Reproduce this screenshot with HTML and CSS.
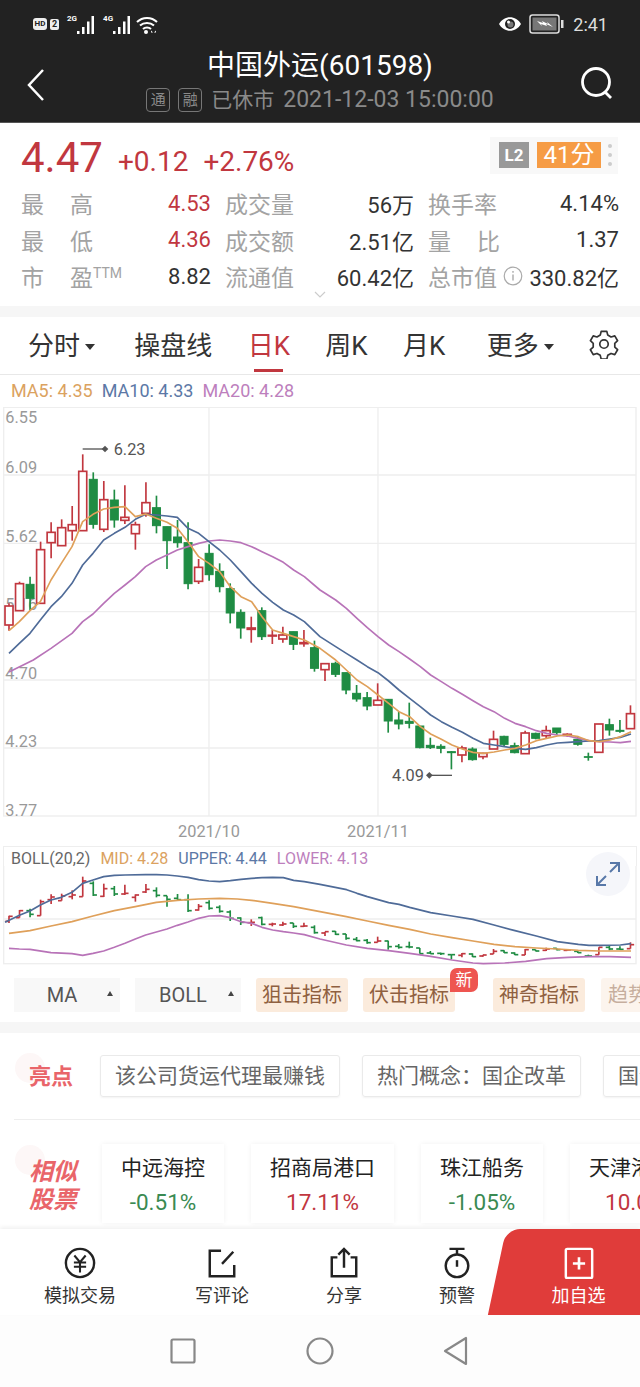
FILE: index.html
```html
<!DOCTYPE html>
<html lang="zh">
<head>
  <meta charset="utf-8">
  <title>中国外运(601598)</title>
  <link rel="stylesheet" href="styles.css">
</head>
<body>
  <div class="app">
    <header class="top">
      <div class="status">
        <div class="status-side">
          <span class="hd">HD</span>
          <span class="sim">2</span>
          <span class="net">2G</span>
          <svg class="bars" width="18" height="18" viewBox="0 0 18 18"><path d="M1 18v-3h2.500v3zM6 18V11h2.500v7zM11 18V5.500h2.500V18zM15.500 18V0h2.500v18z"/></svg>
          <span class="net net-next">4G</span>
          <svg class="bars" width="18" height="18" viewBox="0 0 18 18"><path d="M1 18v-3h2.500v3zM6 18V11h2.500v7zM11 18V5.500h2.500V18zM15.500 18V0h2.500v18z"/></svg>
          <svg class="wifi" width="22" height="18" viewBox="0 0 22 18">
            <path d="M1 6c5.500-5.500 14.500-5.500 20 0M4 9.500c3.800-3.500 10.200-3.500 14 0M7 13c2.200-2 5.800-2 8 0" fill="none" stroke="#fff" stroke-width="2"/>
            <circle cx="10" cy="16" r="2" fill="#fff"/>
            <path d="M15 14.500l2 2-2 0zM20 14.500l-2 2 2 0z" fill="#fff"/>
          </svg>
        </div>
        <div class="status-side">
          <svg width="24" height="16" viewBox="0 0 24 16">
            <path d="M1 8c5-9 17-9 22 0-5 9-17 9-22 0z" fill="#fff"/>
            <circle cx="12" cy="8" r="5" fill="#222"/>
            <circle cx="12.500" cy="8.500" r="3" fill="#777"/>
            <circle cx="10.500" cy="6" r="1.500" fill="#fff"/>
          </svg>
          <svg class="batt" width="35" height="20" viewBox="0 0 35 20">
            <rect x="1" y="1" width="29" height="18" rx="2.500" fill="none" stroke="#ddd" stroke-width="1.500"/>
            <rect x="3.500" y="3.500" width="24" height="13" fill="#777"/>
            <path d="M8 7l6 2-1-2 6 3-1-2 6 5-7-3 1 2-6-2 1 2z" fill="#fff"/>
            <rect x="32" y="6" width="2.500" height="8" fill="#ddd"/>
          </svg>
          <span class="clock">2:41</span>
        </div>
      </div>
      <div class="titlebar">
        <svg class="back" width="20" height="34" viewBox="0 0 20 34"><path d="M17 2L3 17l14 15" fill="none" stroke="#fff" stroke-width="2.500"/></svg>
        <div class="title-mid">
          <h1 class="stock-name">中国外运(601598)</h1>
          <div class="market">
            <span class="tag">通</span>
            <span class="tag">融</span>
            <span class="market-text">已休市</span>
            <span class="market-time">2021-12-03 15:00:00</span>
          </div>
        </div>
        <svg class="search" width="34" height="34" viewBox="0 0 34 34">
          <circle cx="16" cy="15" r="13.500" fill="none" stroke="#fff" stroke-width="2.800"/>
          <path d="M25 25l6 6" stroke="#fff" stroke-width="2.800"/>
        </svg>
      </div>
    </header>

    <section class="quote">
      <div class="price-row">
        <span class="price">4.47</span>
        <span class="delta">+0.12</span>
        <span class="delta">+2.76%</span>
        <div class="score">
          <span class="l2">L2</span>
          <span class="points">41分</span>
          <span class="dots"><i></i><i></i><i></i></span>
        </div>
      </div>
      <div class="stats">
        <div class="stat"><span class="lbl spread"><b>最</b><b>高</b></span><span class="val up">4.53</span></div>
        <div class="stat"><span class="lbl">成交量</span><span class="val">56万</span></div>
        <div class="stat"><span class="lbl">换手率</span><span class="val">4.14%</span></div>
        <div class="stat"><span class="lbl spread"><b>最</b><b>低</b></span><span class="val up">4.36</span></div>
        <div class="stat"><span class="lbl">成交额</span><span class="val">2.51亿</span></div>
        <div class="stat"><span class="lbl spread"><b>量</b><b>比</b></span><span class="val">1.37</span></div>
        <div class="stat"><span class="lbl spread"><b>市</b><b>盈<sup class="ttm">TTM</sup></b></span><span class="val">8.82</span></div>
        <div class="stat"><span class="lbl">流通值</span><span class="val">60.42亿</span></div>
        <div class="stat">
          <span class="lbl">总市值</span>
          <svg class="info" width="20" height="20" viewBox="0 0 20 20">
            <circle cx="10" cy="10" r="8.800" fill="none" stroke="#aaa" stroke-width="1.200"/>
            <path d="M10 8.500v6M10 5v1.800" stroke="#aaa" stroke-width="1.400"/>
          </svg>
          <span class="val val-push">330.82亿</span>
        </div>
      </div>
      <svg class="more-down" width="12" height="7" viewBox="0 0 12 7"><path d="M1 1l5 5 5-5" fill="none" stroke="#ccc" stroke-width="1.200"/></svg>
    </section>

    <nav class="periods">
      <span class="period period-first has-caret">分时</span>
      <span class="period">操盘线</span>
      <span class="period active">日K</span>
      <span class="period">周K</span>
      <span class="period">月K</span>
      <span class="period period-more has-caret">更多</span>
      <svg width="30" height="30" viewBox="0 0 32 32">
        <path d="M13 2.500h6l1 4 3.500 2 4-1.200 3 5.200-3 2.800v4l3 2.800-3 5.200-4-1.200-3.500 2-1 4h-6l-1-4-3.500-2-4 1.200-3-5.200 3-2.800v-4l-3-2.800 3-5.200 4 1.200 3.500-2z" fill="none" stroke="#333" stroke-width="1.800" stroke-linejoin="round"/>
        <circle cx="16" cy="16" r="4.500" fill="none" stroke="#333" stroke-width="1.800"/>
      </svg>
    </nav>

    <section class="kline">
      <div class="legend">
        <span class="c-orange">MA5: 4.35</span>
        <span class="c-blue">MA10: 4.33</span>
        <span class="c-purple">MA20: 4.28</span>
      </div>
      <svg id="kchart" class="kchart" width="640" height="438" viewBox="0 21 1920 1314"></svg>
    </section>

    <section class="boll">
      <div class="legend legend-boll">
        <span class="c-grey">BOLL(20,2)</span>
        <span class="c-orange">MID: 4.28</span>
        <span class="c-blue">UPPER: 4.44</span>
        <span class="c-purple">LOWER: 4.13</span>
      </div>
      <svg id="bollchart" class="bollchart" width="640" height="99" viewBox="0 3 1920 297"></svg>
      <div class="expand">
        <svg width="28" height="28" viewBox="0 0 28 28">
          <path d="M16 3h9v9M25 3l-9 9M12 25H3v-9M3 25l9-9" fill="none" stroke="#5878a8" stroke-width="2"/>
        </svg>
      </div>
    </section>

    <div class="indicators">
      <span class="select">MA</span>
      <span class="select">BOLL</span>
      <span class="pill">狙击指标</span>
      <span class="pill pill-new">伏击指标<em class="badge">新</em></span>
      <span class="pill pill-third">神奇指标</span>
      <span class="pill pill-fade">趋势指标</span>
    </div>

    <div class="gap"></div>

    <section class="highlights">
      <div class="mark">亮点</div>
      <span class="chip">该公司货运代理最赚钱</span>
      <span class="chip">热门概念：国企改革</span>
      <span class="chip">国企改革</span>
    </section>

    <section class="similar">
      <div class="mark mark-tall">相似<br>股票</div>
      <div class="stock-card"><span class="card-name">中远海控</span><span class="card-pct down">-0.51%</span></div>
      <div class="stock-card"><span class="card-name">招商局港口</span><span class="card-pct up">17.11%</span></div>
      <div class="stock-card"><span class="card-name">珠江船务</span><span class="card-pct down">-1.05%</span></div>
      <div class="stock-card"><span class="card-name">天津港股份</span><span class="card-pct up">10.05%</span></div>
    </section>

    <footer class="actions">
      <div class="action action-sim">
        <svg width="32" height="32" viewBox="0 0 34 34">
          <circle cx="17" cy="17" r="15" fill="none" stroke="#222" stroke-width="2.600"/>
          <path d="M11 9l6 7 6-7M10.500 16.500h13M10.500 21h13M17 16v11" fill="none" stroke="#222" stroke-width="2.200"/>
        </svg>
        <span>模拟交易</span>
      </div>
      <div class="action action-write">
        <svg width="32" height="32" viewBox="0 0 34 34">
          <path d="M16 4H4v27h26V19" fill="none" stroke="#222" stroke-width="2.600"/>
          <path d="M17 18L29 5" stroke="#222" stroke-width="2.600"/>
        </svg>
        <span>写评论</span>
      </div>
      <div class="action action-share">
        <svg width="32" height="32" viewBox="0 0 34 34">
          <path d="M10 11H4v20h26V11h-6" fill="none" stroke="#222" stroke-width="2.600"/>
          <path d="M17 22V3M11 8l6-6 6 6" fill="none" stroke="#222" stroke-width="2.600"/>
        </svg>
        <span>分享</span>
      </div>
      <div class="action action-alert">
        <svg width="32" height="32" viewBox="0 0 34 34">
          <path d="M9 2h16M17 2v6" stroke="#222" stroke-width="2.600"/>
          <circle cx="17" cy="20" r="12" fill="none" stroke="#222" stroke-width="2.600"/>
          <path d="M17 14v7" stroke="#222" stroke-width="2.600"/>
        </svg>
        <span>预警</span>
      </div>
      <div class="action action-add">
        <svg width="32" height="32" viewBox="0 0 34 34">
          <rect x="3" y="2" width="28" height="31" rx="1.500" fill="none" stroke="#fff" stroke-width="2.600"/>
          <path d="M17 11v13M10.500 17.500h13" stroke="#fff" stroke-width="2.800"/>
        </svg>
        <span>加自选</span>
      </div>
    </footer>

    <div class="sysnav">
      <svg width="26" height="26" viewBox="0 0 26 26"><rect x="1.500" y="1.500" width="23" height="23" rx="1.500" fill="none" stroke="#888" stroke-width="2.200"/></svg>
      <svg width="28" height="28" viewBox="0 0 28 28"><circle cx="14" cy="14" r="12.500" fill="none" stroke="#888" stroke-width="2.200"/></svg>
      <svg width="26" height="30" viewBox="0 0 26 30"><path d="M23 2v26L2 15z" fill="none" stroke="#888" stroke-width="2.200" stroke-linejoin="round"/></svg>
    </div>
  </div>
  <script src="chart.js"></script>
</body>
</html>
```
FILE: styles.css
```css
* {
  box-sizing: border-box;
}

body {
  margin: 0;
  background-color: #fff;
  font-family: Roboto, "Noto Sans CJK SC", sans-serif;
  color: #333;
}

.app {
  width: 640px;
  height: 1387px;
  overflow: hidden;
}

.up {
  color: #c1373f;
}

.down {
  color: #3a8a52;
}

/* dark header */
.top {
  height: 123px;
  background-color: #222;
  border-bottom: 1px solid #555;
  color: #fff;
}

.status {
  height: 40px;
  padding: 8px 32px 0 33px;
  display: flex;
  justify-content: space-between;
  align-items: center;
}

.status-side {
  display: flex;
  align-items: center;
}

.hd {
  width: 14px;
  height: 12px;
  border-radius: 3px;
  background-color: #eee;
  color: #222;
  font-size: 8px;
  font-weight: 700;
  line-height: 12px;
  text-align: center;
}

.sim {
  width: 9px;
  height: 11px;
  margin-left: 3px;
  border-radius: 2px;
  background-color: #eee;
  color: #222;
  font-size: 9px;
  font-weight: 700;
  line-height: 11px;
  text-align: center;
}

.net {
  margin: -12px -1px 0 8px;
  font-size: 8px;
  font-weight: 700;
}

.net-next {
  margin-left: 9px;
}

.bars {
  fill: #fff;
  margin-top: 2px;
}

.wifi {
  margin-left: 6px;
  margin-top: 2px;
}

.batt {
  margin-left: 7px;
}

.clock {
  margin-left: 9px;
  font-size: 18px;
  color: #ddd;
}

.titlebar {
  padding: 0 26px;
  display: flex;
  justify-content: space-between;
  align-items: flex-start;
}

.back {
  margin-top: 28px;
}

.search {
  margin-top: 27px;
}

.title-mid {
  display: flex;
  flex-direction: column;
  align-items: center;
  margin-top: 8px;
  margin-left: 14px;
}

.stock-name {
  margin: 0;
  font-size: 28px;
  font-weight: 400;
  line-height: 36px;
}

.market {
  margin-top: 3px;
  display: flex;
  align-items: center;
  color: #8a8a8a;
  font-size: 21px;
  line-height: 26px;
}

.tag {
  width: 24px;
  height: 24px;
  margin-right: 8px;
  border: 1px solid #777;
  border-radius: 4px;
  font-size: 15px;
  line-height: 22px;
  text-align: center;
}

.market-text {
  margin-left: 1px;
}

.market-time {
  margin-left: 9px;
  font-size: 23px;
}

/* price block */
.quote {
  position: relative;
  height: 183px;
  padding: 0 19px 0 21px;
}

.price-row {
  height: 62px;
  display: flex;
  align-items: center;
}

.price {
  margin: 6px 15px 0 0;
  font-size: 42px;
  color: #c1373f;
}

.delta {
  margin: 14px 15px 0 0;
  font-size: 28px;
  color: #c1373f;
}

.score {
  margin: 2px 3px 0 auto;
  height: 37px;
  padding: 0 6px 0 9px;
  display: flex;
  align-items: center;
  background-color: #f8f8f8;
}

.l2 {
  width: 30px;
  height: 26px;
  background-color: #999;
  color: #fff;
  font-size: 17px;
  font-weight: 700;
  line-height: 26px;
  text-align: center;
}

.points {
  width: 64px;
  height: 26px;
  margin-left: 8px;
  background-color: #f69c45;
  color: #fff;
  font-size: 24px;
  line-height: 26px;
  text-align: center;
}

.dots {
  margin-left: 7px;
  display: flex;
  flex-direction: column;
  gap: 5px;
}

.dots i {
  width: 4px;
  height: 4px;
  border-radius: 50%;
  background-color: #ccc;
}

.stats {
  display: grid;
  grid-template-columns: 190px 189px 191px;
  grid-auto-rows: 36.500px;
  column-gap: 14px;
}

.stat {
  display: flex;
  justify-content: space-between;
  align-items: center;
}

.lbl {
  font-size: 23px;
  color: #a3a3a3;
}

.lbl b {
  font-weight: 400;
}

.spread {
  width: 73px;
  display: flex;
  justify-content: space-between;
}

.spread b:last-child {
  white-space: nowrap;
  width: 24px;
}

.ttm {
  font-size: 14px;
  vertical-align: 8px;
  line-height: 0;
}

.val {
  font-size: 22px;
}

.info {
  margin-left: 3px;
}

.val-push {
  margin-left: 3px;
}

.more-down {
  position: absolute;
  left: 314px;
  top: 168px;
}

/* period tabs */
.periods {
  height: 69px;
  padding: 0 21px 4px 28px;
  border-top: 11px solid #f6f6f6;
  border-bottom: 1px solid #e8e8e8;
  display: flex;
  justify-content: space-between;
  align-items: center;
  font-size: 26px;
  color: #333;
}

.period {
  position: relative;
}

.period-first {
  margin-right: 4px;
}

.period-more {
  margin-left: 6px;
}

.has-caret::after {
  content: "";
  display: inline-block;
  margin-left: 5px;
  vertical-align: 5px;
  border-style: solid;
  border-width: 6px 5px 0;
  border-color: #333 transparent transparent;
}

.active {
  color: #c1373f;
}

.active::after {
  content: "";
  position: absolute;
  left: 6px;
  right: 7px;
  bottom: -10px;
  height: 3px;
  background-color: #c1373f;
}

/* charts */
.kline {
  height: 471px;
}

.legend {
  height: 32px;
  padding: 6px 0 0 11px;
  display: flex;
  gap: 9px;
  font-size: 18px;
  line-height: 20px;
}

.c-orange {
  color: #dba25f;
}

.c-blue {
  color: #5c78a6;
}

.c-purple {
  color: #bd7fbd;
}

.c-grey {
  color: #666;
}

.kchart,
.bollchart {
  display: block;
}

.grid-line {
  stroke: #eee;
  stroke-width: 4;
  fill: none;
}

.axis-text {
  font-size: 49px;
  fill: #999;
}

.mark-text {
  font-size: 49px;
  fill: #555;
}

.mark-line {
  stroke: #555;
  stroke-width: 4;
}

.mark-dot {
  fill: #555;
}

.wick-up {
  stroke: #c1373f;
  stroke-width: 5;
}

.wick-down {
  stroke: #1f8c43;
  stroke-width: 5;
}

.body-up {
  fill: #fff;
  stroke: #c1373f;
  stroke-width: 5;
}

.body-down {
  fill: #1f8c43;
  stroke: #1f8c43;
  stroke-width: 3;
}

.line {
  fill: none;
  stroke-width: 5;
  stroke-linejoin: round;
}

.line-orange {
  stroke: #dfa05a;
}

.line-blue {
  stroke: #4f6b98;
}

.line-purple {
  stroke: #b873b8;
}

.boll {
  position: relative;
  height: 119px;
}

.legend-boll {
  height: 20px;
  margin: 0 3px;
  padding: 2px 0 0 7px;
  border: 1.500px solid #eee;
  border-bottom: 0;
  gap: 10px;
  font-size: 16px;
}

.expand {
  position: absolute;
  left: 586px;
  top: 6px;
  width: 44px;
  height: 44px;
  padding: 8px;
  border-radius: 50%;
  background-color: #f5f6fa;
}

/* indicator selector */
.indicators {
  height: 57px;
  padding: 13px 0 0 14px;
  display: flex;
  gap: 15px;
  overflow: hidden;
  background-color: #fff;
}

.select {
  position: relative;
  flex: none;
  width: 106px;
  height: 34px;
  padding-right: 10px;
  background-color: #f8f8f8;
  font-size: 20px;
  line-height: 34px;
  text-align: center;
  color: #555;
}

.select::after {
  content: "";
  position: absolute;
  right: 7px;
  top: 13px;
  border-style: solid;
  border-width: 0 3.500px 5px;
  border-color: transparent transparent #444;
}

.pill {
  position: relative;
  flex: none;
  width: 92px;
  height: 34px;
  border-radius: 3px;
  background-color: #fbebdc;
  color: #8f6040;
  font-size: 20px;
  line-height: 34px;
  text-align: center;
}

.pill-third {
  margin-left: 23px;
}

.pill-fade {
  margin-left: 1px;
  padding-left: 7px;
  text-align: left;
  opacity: 0.5;
}

.badge {
  position: absolute;
  left: 87px;
  top: -10px;
  width: 28px;
  height: 24px;
  border-radius: 7px 7px 7px 0;
  background-color: #ee5550;
  color: #fff;
  font-size: 17px;
  font-style: normal;
  line-height: 24px;
  text-align: center;
}

.gap {
  height: 11px;
  background-color: #f6f6f6;
}

/* highlights and similar stocks */
.highlights {
  position: relative;
  height: 87px;
  margin-left: 14px;
  padding: 22px 0 0 15px;
  border-bottom: 1px solid #eee;
  display: flex;
  gap: 22px;
}

.mark {
  position: relative;
  flex: none;
  width: 49px;
  margin-top: 9px;
  font-size: 22px;
  font-weight: 700;
  line-height: 26px;
  color: #e9656a;
}

.mark::before {
  content: "";
  position: absolute;
  left: -14px;
  top: -11px;
  width: 30px;
  height: 30px;
  border-radius: 50%;
  background-color: #fdf7f7;
  z-index: -1;
}

.chip {
  flex: none;
  height: 42px;
  padding: 0 14px;
  border: 1px solid #eaeaea;
  border-radius: 3px;
  box-shadow: 0 1px 2px rgba(0,0,0,0.05);
  font-size: 21px;
  line-height: 40px;
  color: #666;
}

.similar {
  height: 109px;
  padding: 24px 0 0 29px;
  display: flex;
  overflow: hidden;
}

.mark-tall {
  width: 50px;
  margin: 14px 23px 0 0;
  font-size: 24px;
  font-style: italic;
  line-height: 28px;
}

.mark-tall::before {
  left: -14px;
  top: -13px;
}

.stock-card {
  flex: none;
  height: 79px;
  margin-right: 27px;
  padding: 9px 19px 0;
  display: flex;
  flex-direction: column;
  align-items: center;
  box-shadow: 0 0 5px rgba(0,0,0,0.06);
}

.card-name {
  font-size: 21px;
  line-height: 30px;
  color: #222;
}

.card-pct {
  margin-top: 5px;
  font-size: 22.500px;
  line-height: 28px;
}

/* bottom action bar */
.actions {
  position: relative;
  height: 86px;
  display: flex;
  background-color: #fff;
  box-shadow: 0 -2px 4px rgba(0,0,0,0.06);
}

.action {
  position: relative;
  flex: none;
  padding-top: 18px;
  display: flex;
  flex-direction: column;
  align-items: center;
  font-size: 18px;
  line-height: 24px;
  color: #333;
}

.action span {
  margin-top: 5px;
}

.action-sim {
  width: 160px;
}

.action-write {
  width: 124px;
}

.action-share {
  width: 120px;
}

.action-alert {
  width: 106px;
}

.action-add {
  width: 153px;
  margin-left: -23px;
  padding-left: 30px;
  color: #fff;
  overflow: hidden;
}

.action-add::before {
  content: "";
  position: absolute;
  left: 10px;
  top: 0;
  width: 180px;
  height: 100%;
  background-color: #e03c3a;
  border-top-left-radius: 14px;
  transform: skewX(-12deg);
}

.action-add svg,
.action-add span {
  position: relative;
}

.sysnav {
  height: 72px;
  background-color: #fdfdfd;
  display: flex;
  justify-content: space-between;
  align-items: center;
  padding: 0 171px 0 170px;
}
```
FILE: chart.js
```js
// chart coordinates are in thirds of a pixel, candles sit on a fixed 31.6 step
const STEP = 31.6;
const X0 = 27;

// [wick top, body top, body bottom, wick bottom, 1 = up]
const candles = [
  [610,618,675,692,1],[545,551,632,632,1],[530,553,595,630,0],[425,449,610,610,1],
  [367,397,428,475,1],[358,383,437,437,1],[318,374,392,422,1],[163,214,392,392,1],
  [217,238,373,386,0],[243,299,388,396,1],[269,300,360,383,0],[256,352,361,372,1],
  [365,374,401,449,1],[247,308,340,350,1],[287,323,377,400,0],[380,380,422,507,0],
  [360,411,428,443,0],[367,428,551,568,0],[477,502,544,552,1],[433,460,524,542,0],
  [490,514,560,577,0],[550,566,639,670,0],[628,637,684,716,0],[650,684,688,728,1],
  [622,632,710,720,0],[690,706,708,732,1],[680,705,717,728,1],[695,695,733,750,0],
  [690,728,731,740,1],[722,743,805,815,0],
  [791,791,809,843,1],[785,790,823,831,0],[818,818,870,883,0],[855,880,897,905,0],
  [876,893,918,931,0],[850,901,915,915,1],[897,898,963,998,0],[935,960,972,988,0],
  [908,964,970,985,0],[978,978,1043,1045,0],[1013,1036,1043,1047,0],[1033,1039,1045,1060,0],
  [1053,1055,1058,1108,0],[1037,1044,1065,1087,1],[1042,1047,1079,1082,0],[1058,1060,1070,1078,1],
  [992,1018,1047,1047,1],[1007,1009,1033,1038,0],[1028,1037,1058,1060,0],[992,999,1061,1061,1],
  [998,1000,1015,1018,0],[977,992,1007,1015,1],[984,984,998,1005,0],[1000,1003,1006,1010,1],
  [1010,1018,1033,1037,0],[1058,1070,1072,1082,0],[972,972,1057,1057,1],[956,974,990,1007,0],
  [960,991,994,998,0],[916,941,986,986,1]
];

const ma5 = [[27,692],[58,665],[90,632],[121,605],[153,540],[184,490],[216,440],[248,365],[279,343],[311,327],[343,322],[375,320],[406,350],[437,342],[469,355],[501,367],[532,385],[564,425],[596,470],[627,490],[659,515],[691,560],[723,590],[755,605],[786,650],[818,690],[850,700],[881,710],[913,720],[960,745],[1007,780],[1039,810],[1071,840],[1102,860],[1134,885],[1166,910],[1197,935],[1229,950],[1261,980],[1292,1002],[1324,1018],[1356,1035],[1387,1047],[1419,1057],[1450,1060],[1482,1056],[1514,1050],[1545,1045],[1577,1035],[1609,1022],[1640,1015],[1672,1008],[1704,1005],[1735,1010],[1767,1022],[1798,1025],[1830,1020],[1861,1010],[1893,995]];
const ma10 = [[27,760],[58,730],[90,700],[121,660],[153,620],[184,590],[216,550],[248,495],[279,460],[311,420],[343,400],[375,382],[406,358],[437,343],[469,345],[501,348],[532,352],[564,385],[596,400],[627,425],[659,450],[691,480],[723,515],[755,550],[786,580],[818,607],[850,630],[881,645],[913,665],[960,710],[1007,740],[1039,760],[1071,780],[1102,800],[1134,818],[1166,843],[1197,870],[1229,895],[1261,920],[1292,945],[1324,965],[1356,982],[1387,997],[1419,1015],[1450,1030],[1482,1035],[1514,1040],[1545,1045],[1577,1048],[1609,1043],[1640,1035],[1672,1029],[1704,1027],[1735,1025],[1767,1023],[1798,1022],[1830,1017],[1861,1012],[1893,1002]];
const ma20 = [[27,816],[100,780],[153,745],[216,700],[248,665],[279,642],[311,610],[343,580],[375,555],[406,530],[437,500],[469,480],[501,465],[532,450],[564,440],[596,430],[627,423],[659,420],[691,423],[723,428],[755,440],[786,455],[818,470],[850,487],[881,510],[913,530],[960,570],[1007,600],[1039,625],[1071,655],[1102,683],[1134,710],[1166,735],[1197,755],[1229,777],[1261,800],[1292,825],[1324,845],[1356,865],[1387,883],[1419,902],[1450,920],[1482,935],[1514,955],[1545,970],[1577,980],[1609,992],[1640,1000],[1672,1005],[1704,1008],[1735,1015],[1767,1022],[1798,1025],[1830,1026],[1861,1028],[1893,1024]];

const upper = [[15,172],[60,150],[90,138],[121,120],[153,105],[184,97],[216,82],[248,55],[279,45],[311,35],[343,31],[375,30],[437,29],[469,29],[501,30],[532,33],[564,37],[596,44],[627,48],[659,50],[691,47],[723,43],[755,40],[786,38],[818,37],[850,38],[881,46],[913,50],[960,58],[1040,74],[1071,85],[1102,95],[1166,113],[1197,118],[1229,127],[1292,143],[1356,153],[1419,163],[1482,180],[1545,197],[1609,213],[1672,230],[1735,238],[1767,241],[1798,241],[1861,240],[1893,236]];
const mid = [[27,205],[90,197],[153,183],[216,170],[279,153],[343,137],[406,125],[469,112],[532,106],[596,102],[659,100],[712,102],[755,106],[818,115],[881,125],[960,140],[1039,155],[1102,168],[1166,181],[1229,193],[1292,207],[1356,218],[1419,228],[1482,238],[1545,245],[1609,249],[1672,252],[1735,256],[1798,258],[1893,258]];
const lower = [[27,250],[58,252],[90,253],[153,263],[216,266],[248,271],[279,265],[311,258],[343,247],[375,235],[406,222],[437,210],[469,201],[501,192],[532,181],[564,171],[596,160],[627,153],[659,152],[691,158],[723,170],[755,175],[786,187],[818,195],[850,200],[881,204],[913,209],[960,222],[1039,240],[1102,250],[1166,257],[1229,265],[1292,274],[1356,285],[1419,294],[1450,296],[1514,294],[1577,289],[1640,281],[1704,277],[1767,275],[1830,275],[1893,277]];

function polyline(points, cls) {
  return `<polyline class="line ${cls}" points="${points.join(" ")}"/>`;
}

function gridLines(rows, cols, left, right, top, bottom) {
  let out = `<rect class="grid-line" x="${left}" y="${top}" width="${right - left}" height="${bottom - top}"/>`;
  rows.forEach(y => {
    out += `<line class="grid-line" x1="${left}" x2="${right}" y1="${y}" y2="${y}"/>`;
  });
  cols.forEach(x => {
    out += `<line class="grid-line" x1="${x}" x2="${x}" y1="${top}" y2="${bottom}"/>`;
  });
  return out;
}

function drawKline() {
  let out = gridLines([225, 430, 635, 840, 1044], [627, 1134], 11, 1908, 22, 1248);

  const labels = [["6.55", 70], ["6.09", 218], ["5.62", 427], ["5.16", 630], ["4.70", 838], ["4.23", 1042], ["3.77", 1247]];
  labels.forEach(([text, y]) => {
    out += `<text class="axis-text" x="16" y="${y}">${text}</text>`;
  });
  out += `<text class="axis-text" x="627" y="1310" text-anchor="middle">2021/10</text>`;
  out += `<text class="axis-text" x="1134" y="1310" text-anchor="middle">2021/11</text>`;

  candles.forEach((c, i) => {
    const x = X0 + STEP * i;
    const kind = c[4] ? "up" : "down";
    out += `<line class="wick-${kind}" x1="${x}" x2="${x}" y1="${c[0]}" y2="${c[3]}"/>`;
    out += `<rect class="body-${kind}" x="${x - 12}" y="${c[1]}" width="24" height="${c[2] - c[1]}"/>`;
  });

  out += polyline(ma20, "line-purple") + polyline(ma10, "line-blue") + polyline(ma5, "line-orange");

  // highest and lowest price marks
  out += `<line class="mark-line" x1="248" x2="315" y1="147" y2="147"/>`;
  out += `<path class="mark-dot" d="M305 147l10-10 10 10-10 10z"/>`;
  out += `<text class="mark-text" x="341" y="165">6.23</text>`;
  out += `<line class="mark-line" x1="1288" x2="1356" y1="1126" y2="1126"/>`;
  out += `<path class="mark-dot" d="M1278 1126l10-10 10 10-10 10z"/>`;
  out += `<text class="mark-text" x="1176" y="1144">4.09</text>`;

  document.getElementById("kchart").innerHTML = out;
}

function drawBoll() {
  // bars reuse the candle prices, squeezed into the lower panel
  const toY = y => Math.round(35 + 0.262 * (y - 163));
  let out = gridLines([162], [], 11, 1908, -20, 296);

  candles.forEach((c, i) => {
    const x = X0 + STEP * i;
    const kind = c[4] ? "up" : "down";
    const left = toY(c[4] ? c[2] : c[1]);
    const right = toY(c[4] ? c[1] : c[2]);
    out += `<line class="wick-${kind}" x1="${x}" x2="${x}" y1="${toY(c[0])}" y2="${toY(c[3])}"/>`;
    out += `<line class="wick-${kind}" x1="${x - 11}" x2="${x}" y1="${left}" y2="${left}"/>`;
    out += `<line class="wick-${kind}" x1="${x}" x2="${x + 11}" y1="${right}" y2="${right}"/>`;
  });

  out += polyline(upper, "line-blue") + polyline(mid, "line-orange") + polyline(lower, "line-purple");
  document.getElementById("bollchart").innerHTML = out;
}

drawKline();
drawBoll();
```
